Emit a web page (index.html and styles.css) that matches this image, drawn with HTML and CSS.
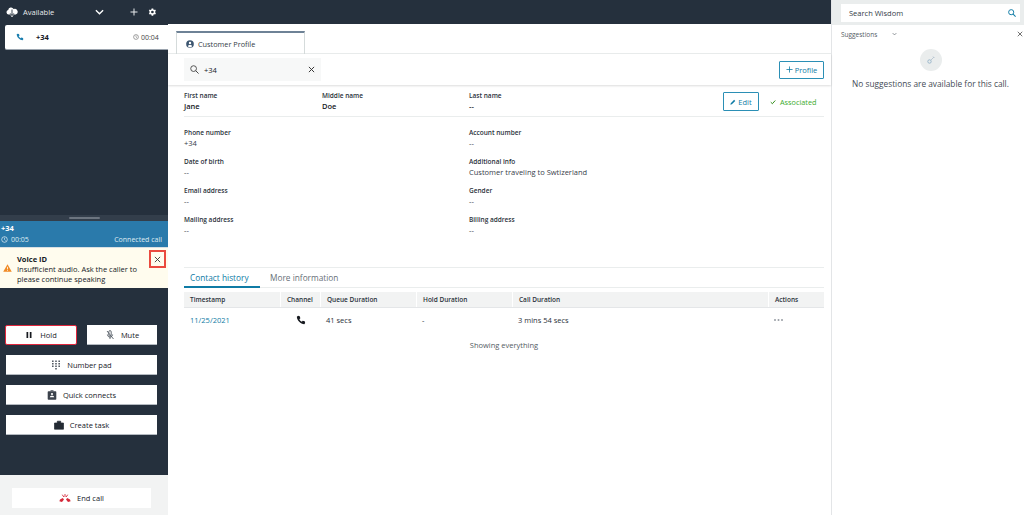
FILE: index.html
```html
<!DOCTYPE html>
<html lang="en">
<head>
  <meta charset="UTF-8">
  <title>Contact Control Panel</title>
  <link rel="stylesheet" href="styles.css">
</head>
<body>
  <!-- SOFTPHONE -->
  <aside class="ccp">
    <div class="status">
      <svg class="ic-cloud" viewBox="0 0 12 10"><path fill="#fff" d="M2.600 7.500A2.300 2.300 0 0 1 2.200 3 2.900 2.900 0 0 1 7.600 2 2.400 2.400 0 0 1 9.800 7.500z"/><path d="M6 2.500v5.500M4.200 6.400 6 8.300l1.800-1.900" fill="none" stroke="#25303d" stroke-width=".9"/><path d="M6 7.500v2M4.800 8.600 6 9.800l1.200-1.200" fill="none" stroke="#fff" stroke-width=".8"/></svg>
      <span class="status-name">Available</span>
      <svg class="ic-chev" viewBox="0 0 10 6"><path d="M1 1l4 4 4-4" fill="none" stroke="#fff" stroke-width="1.500"/></svg>
      <svg class="ic-plus" viewBox="0 0 8 8"><path d="M4 .5v7M.5 4h7" stroke="#e8eaed" stroke-width="1"/></svg>
      <svg class="ic-gear" viewBox="0 0 24 24"><path fill="#fff" fill-rule="evenodd" d="M19.400 13a7.500 7.500 0 0 0 0-2l2.100-1.600-2-3.500-2.500 1a7.500 7.500 0 0 0-1.700-1L15 3.300h-4l-.4 2.600a7.500 7.500 0 0 0-1.700 1l-2.500-1-2 3.500L6.500 11a7.500 7.500 0 0 0 0 2l-2.100 1.600 2 3.500 2.500-1a7.500 7.500 0 0 0 1.700 1l.4 2.600h4l.4-2.600a7.500 7.500 0 0 0 1.700-1l2.500 1 2-3.500zM13 15.200a3.200 3.200 0 1 1 0-6.400 3.200 3.200 0 0 1 0 6.400z"/></svg>
    </div>
    <div class="call-card">
      <svg class="ic-phone" viewBox="0 0 24 24"><path fill="#1b7fb0" d="M5 2l4 1 1.500 5-2.500 2c1 2.500 3 4.500 6 6l2-2.500 5 1.500 1 4-2 3C11 21.500 2.500 13 2 4z"/></svg>
      <span class="call-num">+34</span>
      <span class="call-time"><svg class="ic-clock" viewBox="0 0 10 10"><circle cx="5" cy="5" r="4" fill="none" stroke="#555" stroke-width=".9"/><path d="M5 2.500V5l1.500 1.500" fill="none" stroke="#555" stroke-width=".8"/></svg>00:04</span>
    </div>
    <div class="spacer-top"></div>
    <div class="handle"><i></i></div>
    <div class="connected">
      <div class="connected-num">+34</div>
      <div class="connected-row">
        <span class="connected-time"><svg class="ic-clock2" viewBox="0 0 10 10"><circle cx="5" cy="5" r="4" fill="none" stroke="#fff" stroke-width=".9"/><path d="M5 2.500V5l1.500 1.500" fill="none" stroke="#fff" stroke-width=".8"/></svg>00:05</span>
        <span>Connected call</span>
      </div>
    </div>
    <div class="alert">
      <svg class="ic-warn" viewBox="0 0 10 9"><path d="M5 .3 9.800 8.700H.2z" fill="#f08a24"/><path d="M5 3.200v2.800M5 6.700v.9" stroke="#fff" stroke-width=".9"/></svg>
      <div class="alert-text">
        <b>Voice ID</b>
        <span>Insufficient audio. Ask the caller to please continue speaking</span>
      </div>
      <div class="alert-close"><svg viewBox="0 0 8 8"><path d="M1 1l6 6M7 1 1 7" stroke="#333" stroke-width="1"/></svg></div>
    </div>
    <div class="actions">
      <div class="btn-row">
        <button class="btn btn-hold"><svg class="ic-btn-sm" viewBox="0 0 8 8"><path d="M1.500 1h1.700v6H1.500zM4.800 1h1.700v6H4.800z" fill="#16191f"/></svg>Hold</button>
        <button class="btn btn-mute"><svg class="ic-btn" viewBox="0 0 10 10"><path d="M3.800 1.800a1.200 1.200 0 0 1 2.400 0V5a1.200 1.200 0 0 1-2.400 0zM2.400 4.500c0 3.400 5.200 3.400 5.200 0M5 7v2M2 1l6.500 8" fill="none" stroke="#545b64" stroke-width=".9"/></svg>Mute</button>
      </div>
      <button class="btn"><svg class="ic-btn" viewBox="0 0 10 10"><g fill="#545b64"><path d="M1 .500h1.600v1.600H1zM4.200 .500h1.600v1.600H4.200zM7.400 .500H9v1.600H7.400zM1 3h1.600v1.600H1zM4.200 3h1.600v1.600H4.200zM7.400 3H9v1.600H7.400zM1 5.500h1.600v1.600H1zM4.200 5.500h1.600v1.600H4.200zM7.400 5.500H9v1.600H7.400zM4.200 8h1.600v1.600H4.200z"/></g></svg>Number pad</button>
      <button class="btn"><svg class="ic-btn" viewBox="0 0 10 10"><path d="M1.500 1.200h7a.8.8 0 0 1 .8.8v7a.8.8 0 0 1-.8.8h-7a.8.8 0 0 1-.8-.8V2a.8.8 0 0 1 .8-.8z" fill="#3b424c"/><path d="M3.500.3h3v1h-3z" fill="#3b424c"/><circle cx="5" cy="4" r="1.100" fill="#fff"/><path d="M2.800 7.200c.4-1.800 4-1.800 4.400 0z" fill="#fff"/></svg>Quick connects</button>
      <button class="btn"><svg class="ic-btn" viewBox="0 0 10 10"><path d="M.5 3h9v6.200h-9zM3.300 3V1.200h3.400V3" fill="#232a33" stroke="#232a33" stroke-width=".7"/></svg>Create task</button>
    </div>
    <div class="footer">
      <button class="btn btn-end"><svg class="ic-btn" viewBox="0 0 12 9"><path d="M.4 7.800 1 6l2.800-1.500L5 6 3 8.400zM11.600 7.800 11 6 8.200 4.500 7 6l2 2.400z" fill="#d5293a"/><path d="M6 .5v3M3.300 1.200 4.800 3.500M8.700 1.200 7.200 3.500" stroke="#d5293a" stroke-width=".9"/></svg>End call</button>
    </div>
  </aside>

  <!-- CUSTOMER PROFILE -->
  <main class="app">
    <div class="app-top"></div>
    <div class="tabbar">
      <div class="tab">
        <svg class="ic-user" viewBox="0 0 10 10"><circle cx="5" cy="5" r="4.800" fill="#3d5670"/><circle cx="5" cy="3.800" r="1.500" fill="#fff"/><path d="M2.200 7.800c.6-2 5-2 5.600 0a4 4 0 0 1-5.600 0z" fill="#fff"/></svg>
        Customer Profile
      </div>
    </div>
    <div class="search-row">
      <div class="search-box">
        <svg class="ic-search" viewBox="0 0 10 10"><circle cx="4" cy="4" r="3.200" fill="none" stroke="#444" stroke-width="1"/><path d="M6.400 6.400 9.500 9.500" stroke="#444" stroke-width="1.100"/></svg>
        <span class="search-val">+34</span>
        <svg class="ic-x" viewBox="0 0 8 8"><path d="M1 1l6 6M7 1 1 7" stroke="#333" stroke-width="1.100"/></svg>
      </div>
      <button class="btn-line btn-profile"><svg class="ic-pl" viewBox="0 0 8 8"><path d="M4 .5v7M.5 4h7" stroke="#0f7ba5" stroke-width=".9"/></svg>Profile</button>
    </div>

    <div class="names">
      <div class="field f-first"><label>First name</label><strong>Jane</strong></div>
      <div class="field f-middle"><label>Middle name</label><strong>Doe</strong></div>
      <div class="field f-last"><label>Last name</label><strong>--</strong></div>
      <button class="btn-line btn-edit"><svg class="ic-pen" viewBox="0 0 8 8"><path d="M.5 7.500 1 5.500 5.500 1 7 2.500 2.500 7z" fill="#0f7ba5"/></svg>Edit</button>
      <span class="assoc"><svg class="ic-check" viewBox="0 0 8 8"><path d="M1 4.200 3.200 6.300 7 2" fill="none" stroke="#1d8102" stroke-width="1.200"/></svg>Associated</span>
    </div>

    <div class="details">
      <div class="field"><label>Phone number</label><span>+34</span></div>
      <div class="field"><label>Account number</label><span>--</span></div>
      <div class="field"><label>Date of birth</label><span>--</span></div>
      <div class="field"><label>Additional info</label><span>Customer traveling to Swtizerland</span></div>
      <div class="field"><label>Email address</label><span>--</span></div>
      <div class="field"><label>Gender</label><span>--</span></div>
      <div class="field"><label>Mailing address</label><span>--</span></div>
      <div class="field"><label>Billing address</label><span>--</span></div>
    </div>

    <div class="history">
      <div class="subtabs">
        <span class="subtab active">Contact history</span>
        <span class="subtab">More information</span>
      </div>
      <div class="tbl tbl-head">
        <div>Timestamp</div><div>Channel</div><div>Queue Duration</div><div>Hold Duration</div><div>Call Duration</div><div>Actions</div>
      </div>
      <div class="tbl tbl-row">
        <div class="link">11/25/2021</div>
        <div class="channel"><svg class="ic-chan" viewBox="0 0 24 24"><path fill="#16191f" d="M5 2l4 1 1.500 5-2.500 2c1 2.500 3 4.500 6 6l2-2.500 5 1.500 1 4-2 3C11 21.500 2.500 13 2 4z"/></svg></div>
        <div>41 secs</div><div>-</div><div>3 mins 54 secs</div>
        <div><svg class="ic-dots" viewBox="0 0 9 2"><circle cx="1" cy="1" r="1" fill="#979ca3"/><circle cx="4.500" cy="1" r="1" fill="#979ca3"/><circle cx="8" cy="1" r="1" fill="#979ca3"/></svg></div>
      </div>
      <div class="showing">Showing everything</div>
    </div>
  </main>

  <!-- WISDOM -->
  <aside class="wisdom">
    <div class="wisdom-search">
      <div class="wisdom-input">
        <span>Search Wisdom</span>
        <svg class="ic-wsearch" viewBox="0 0 10 10"><circle cx="4" cy="4" r="3.200" fill="none" stroke="#0f7ba5" stroke-width="1.200"/><path d="M6.400 6.400 9.500 9.500" stroke="#0f7ba5" stroke-width="1.300"/></svg>
      </div>
    </div>
    <div class="wisdom-head">
      <span class="wisdom-title">Suggestions</span>
      <svg class="ic-wchev" viewBox="0 0 8 5"><path d="M1 1l3 3 3-3" fill="none" stroke="#545b64" stroke-width="1"/></svg>
      <svg class="ic-wx" viewBox="0 0 8 8"><path d="M1 1l6 6M7 1 1 7" stroke="#444" stroke-width="1"/></svg>
    </div>
    <div class="empty">
      <div class="empty-icon"><svg viewBox="0 0 10 10"><circle cx="3.500" cy="6.500" r="1.700" fill="none" stroke="#9cb8cc" stroke-width="1"/><path d="M5 5l3-3M7 1.500 8.500 3" stroke="#b5c4cf" stroke-width=".9"/></svg></div>
      <p class="empty-text">No suggestions are available for this call.</p>
    </div>
  </aside>
</body>
</html>
```

FILE: styles.css
```css
* { box-sizing: border-box; }
html, body { height: 100%; }
body {
  margin: 0;
  height: 515px;
  overflow: hidden;
  display: flex;
  background: #fff;
  color: #16191f;
  font-family: "Open Sans", "Noto Sans", sans-serif;
  font-size: 7.5px;
}
svg { display: block; flex: none; }
button { font-family: inherit; cursor: pointer; }

/* softphone */
.ccp {
  width: 168px;
  height: 515px;
  flex: none;
  background: #25303d;
  display: flex;
  flex-direction: column;
}
.status {
  height: 24px;
  flex: none;
  display: flex;
  align-items: center;
  color: #e8eaed;
  padding-left: 6px;
  font-size: 7.5px;
}
.ic-cloud { width: 12px; height: 10px; }
.status-name { margin-left: 5px; width: 72px; }
.ic-chev { width: 9px; height: 6px; }
.ic-plus { width: 8px; height: 8px; margin-left: 26px; }
.ic-gear { width: 10px; height: 10px; margin-left: 9px; }
.call-card {
  height: 25px;
  margin: 1px 0 0 5px;
  flex: none;
  background: #fff;
  border-radius: 2px 0 0 2px;
  border-bottom: 1px solid #9aa3ad;
  display: flex;
  align-items: center;
  padding-left: 11px;
}
.ic-phone { width: 8px; height: 8px; }
.call-num { margin-left: 12px; font-weight: 700; font-size: 7.5px; width: 97px; }
.call-time { display: flex; align-items: center; gap: 2px; color: #444; font-size: 7px; }
.ic-clock { width: 6px; height: 6px; }
.spacer-top { height: 165px; flex: none; }
.handle { height: 6px; flex: none; background: #333e4b; display: flex; align-items: center; justify-content: center; }
.handle i { display: block; width: 31px; height: 2px; background: #6c7580; border-radius: 1px; }
.connected {
  height: 26px;
  flex: none;
  background: #2a7aab;
  color: #fff;
  padding: 3px 6px 0 1px;
}
.connected-num { font-weight: 700; font-size: 7.5px; line-height: 9px; }
.connected-row { display: flex; justify-content: space-between; align-items: center; margin-top: 2px; color: #dfeaf2; font-size: 7px; line-height: 9px; }
.connected-time { display: flex; align-items: center; gap: 3px; }
.ic-clock2 { width: 7px; height: 7px; }
.alert {
  height: 41px;
  flex: none;
  background: #fffcee;
  border-top: 1px solid #d8dfe3;
  display: flex;
  align-items: flex-start;
  padding: 6px 0 0 3px;
  position: relative;
}
.ic-warn { width: 9px; height: 8px; margin: 10px 5px 0 0; }
.alert-text { width: 130px; line-height: 10px; font-size: 7.5px; }
.alert-text b { display: block; font-weight: 700; }
.alert-close {
  position: absolute;
  left: 149px;
  top: 2px;
  width: 17px;
  height: 18px;
  border: 2px solid #ea4a3f;
  display: flex;
  align-items: center;
  justify-content: center;
}
.alert-close svg { width: 7px; height: 7px; }
.actions {
  flex: 1;
  padding: 37px 11px 0 6px;
  display: flex;
  flex-direction: column;
  gap: 10px;
}
.btn {
  height: 20px;
  border: 0;
  background: #fff;
  color: #16191f;
  font-size: 7.5px;
  display: flex;
  align-items: center;
  justify-content: center;
  gap: 6px;
  padding: 0;
  border-bottom: 1px solid #b4bac1;
}
.ic-btn { width: 10px; height: 10px; }
.ic-btn-sm { width: 8px; height: 8px; }
.btn-row { display: flex; gap: 10px; margin-left: -1px; }
.btn-hold { width: 72px; border: 1px solid #e0263c; border-radius: 2px; gap: 7px; }
.btn-mute { width: 70px; gap: 6px; }
.footer {
  height: 40px;
  flex: none;
  background: #f2f3f3;
  padding: 13px 17px 0 12px;
}
.btn-end { width: 139px; border: 0; }
.btn-end .ic-btn { width: 12px; }

/* customer profile */
.app {
  width: 664px;
  height: 515px;
  flex: none;
  border-right: 1px solid #e3e5e7;
  display: flex;
  flex-direction: column;
}
.app-top { height: 24px; flex: none; background: #25303d; }
.tabbar {
  height: 30px;
  flex: none;
  padding: 7px 0 0 8px;
  border-bottom: 1px solid #eaeded;
}
.tab {
  width: 129px;
  height: 23px;
  border: 1px solid #d5dbdb;
  border-top: 2px solid #6e8296;
  border-bottom: 0;
  display: flex;
  align-items: center;
  padding-left: 9px;
  gap: 4px;
  color: #333c47;
  font-size: 7.300px;
}
.ic-user { width: 8px; height: 8px; }
.search-row {
  height: 31px;
  flex: none;
  display: flex;
  align-items: center;
  justify-content: space-between;
  padding: 0 7px 0 16px;
  box-shadow: 0 1px 2px rgba(0, 0, 0, .14);
}
.search-box {
  width: 137px;
  height: 23px;
  background: #f7f8f8;
  display: flex;
  align-items: center;
  padding: 0 6px;
}
.ic-search { width: 9px; height: 9px; }
.search-val { margin-left: 5px; flex: 1; }
.ic-x { width: 7px; height: 7px; }
.btn-line {
  background: #fff;
  border: 1px solid #2b8fb5;
  border-radius: 1px;
  color: #0f7ba5;
  font-size: 7.500px;
  display: flex;
  align-items: center;
  justify-content: center;
  gap: 2px;
  padding: 0;
}
.btn-profile { width: 45px; height: 18px; }
.ic-pl { width: 7px; height: 7px; }
.names {
  height: 32px;
  margin: 0 7px 0 16px;
  padding-top: 6px;
  flex: none;
  display: flex;
  border-bottom: 1px solid #eaeded;
}
.field label { display: block; font-weight: 600; font-size: 6.500px; line-height: 9px; color: #2b323b; }
.field span, .field strong { display: block; font-size: 7.500px; line-height: 11px; margin-top: 1px; }
.field strong { font-weight: 600; }
.f-first { width: 138px; }
.f-middle { width: 147px; }
.f-last { width: 254px; }
.btn-edit { width: 36px; height: 19px; margin-top: 1px; }
.ic-pen { width: 6px; height: 6px; }
.assoc { display: flex; align-items: center; gap: 4px; height: 19px; margin: 1px 0 0 11px; color: #3cab2c; font-size: 7.300px; }
.ic-check { width: 6px; height: 6px; }
.details {
  height: 151px;
  flex: none;
  margin: 0 7px 0 16px;
  padding-top: 11px;
  display: grid;
  grid-template-columns: 285px 1fr;
  grid-auto-rows: 29px;
  border-bottom: 1px solid #eaeded;
}
.details .field span { color: #37404a; }

.history { margin: 0 7px 0 16px; }
.subtabs { height: 20px; display: flex; border-bottom: 1px solid #eaeded; align-items: stretch; }
.subtab {
  padding: 4px 0 0 6px;
  width: 76px;
  margin-right: 4px;
  color: #687078;
  font-size: 8.300px;
  line-height: 12px;
}
.subtab.active { color: #0f7ba5; border-bottom: 2px solid #0f7ba5; height: 20px; }
.tbl {
  display: grid;
  grid-template-columns: 96px 40px 96px 96px 256px 56px;
}
.tbl-head {
  margin-top: 4px;
  height: 16px;
  background: #f2f3f3;
  border-bottom: 1px solid #e4e6e8;
  font-weight: 600;
  font-size: 6.500px;
  line-height: 15px;
  color: #2b323b;
}
.tbl-head div { padding-left: 6px; border-left: 1px solid #fff; }
.tbl-head div:first-child { border-left: 0; }
.tbl-row { height: 23px; align-items: center; font-size: 7.500px; color: #2b323b; }
.tbl-row > div { padding-left: 6px; }
.link { color: #0f7ba5; }
.ic-chan { width: 10px; height: 10px; margin-left: 16px; }
.channel { padding-left: 0 !important; }
.ic-dots { width: 9px; height: 2px; }
.showing { text-align: center; color: #545b64; margin-top: 9px; font-size: 7.500px; line-height: 11px; }

/* wisdom */
.wisdom { flex: 1; height: 515px; }
.wisdom-search { height: 25px; background: #eaeded; padding: 4px 4px 0 9px; }
.wisdom-input {
  height: 18px;
  background: #fff;
  display: flex;
  align-items: center;
  justify-content: space-between;
  padding: 0 4px 0 8px;
  color: #333c47;
  font-size: 7.500px;
}
.ic-wsearch { width: 8px; height: 8px; }
.wisdom-head { height: 18px; display: flex; align-items: center; padding-left: 9px; position: relative; color: #545b64; font-size: 6.500px; }
.wisdom-title { width: 51px; }
.ic-wchev { width: 5px; height: 4px; }
.ic-wx { width: 6px; height: 6px; position: absolute; right: 1px; top: 6px; }
.empty { padding-left: 5px; }
.empty-icon {
  width: 22px;
  height: 22px;
  border-radius: 50%;
  background: #eaeded;
  margin: 6px auto 0;
  display: flex;
  align-items: center;
  justify-content: center;
}
.empty-icon svg { width: 10px; height: 10px; }
.empty-text { margin: 7px 0 0; text-align: center; color: #444b55; font-size: 8.300px; line-height: 11px; }
```
